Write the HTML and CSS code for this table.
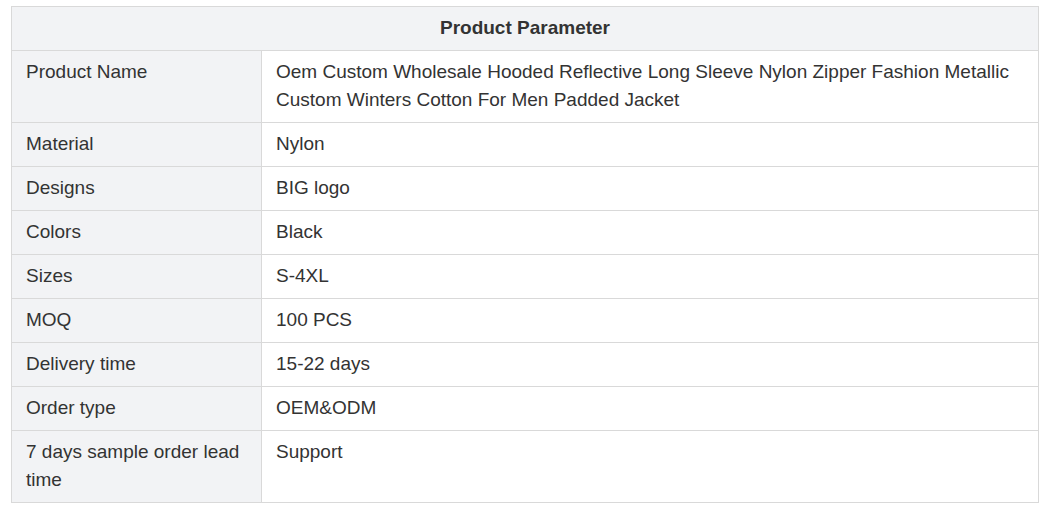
FILE: index.html
```html
<!DOCTYPE html>
<html>
<head>
<meta charset="utf-8">
<link rel="stylesheet" href="styles.css">
</head>
<body>
<table class="params">
  <colgroup>
    <col class="col-key">
    <col class="col-val">
  </colgroup>
  <thead>
    <tr><th colspan="2">Product Parameter</th></tr>
  </thead>
  <tbody>
    <tr><td class="key">Product Name</td><td>Oem Custom Wholesale Hooded Reflective Long Sleeve Nylon Zipper Fashion Metallic Custom Winters Cotton For Men Padded Jacket</td></tr>
    <tr><td class="key">Material</td><td>Nylon</td></tr>
    <tr><td class="key">Designs</td><td>BIG logo</td></tr>
    <tr><td class="key">Colors</td><td>Black</td></tr>
    <tr><td class="key">Sizes</td><td>S-4XL</td></tr>
    <tr><td class="key">MOQ</td><td>100 PCS</td></tr>
    <tr><td class="key">Delivery time</td><td>15-22 days</td></tr>
    <tr><td class="key">Order type</td><td>OEM&amp;ODM</td></tr>
    <tr><td class="key">7 days sample order lead time</td><td>Support</td></tr>
  </tbody>
</table>
</body>
</html>
```
FILE: styles.css
```css
html, body {
  margin: 0;
  padding: 0;
  background: #ffffff;
}
body {
  padding: 6px 21px 0 11px;
  font-family: "Liberation Sans", Arial, sans-serif;
  font-size: 19px;
  color: #333333;
}
.params {
  width: 1028px;
  border-collapse: collapse;
  table-layout: fixed;
}
.col-key {
  width: 250px;
}
.params th,
.params td {
  border: 1px solid #d9d9d9;
  padding: 7px 14px 8px 14px;
  line-height: 28px;
  vertical-align: top;
  text-align: left;
}
.params th {
  background: #f2f3f5;
  text-align: center;
  font-weight: bold;
  color: #333333;
}
.params td.key {
  background: #f2f3f5;
}
```
